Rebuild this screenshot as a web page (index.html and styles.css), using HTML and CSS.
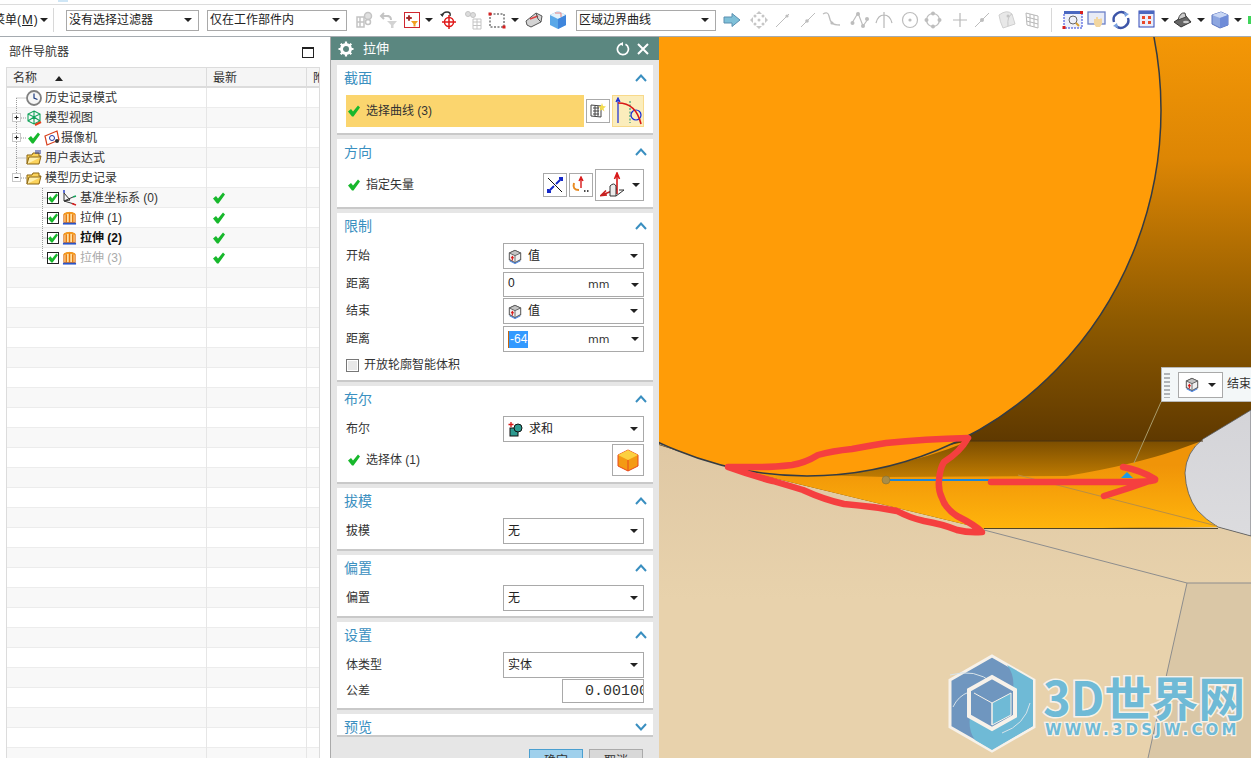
FILE: index.html
```html
<!DOCTYPE html>
<html lang="zh">
<head>
<meta charset="utf-8">
<title>拉伸</title>
<link rel="stylesheet" href="styles.css">
</head>
<body>
<svg class="defs" width="0" height="0" aria-hidden="true">
  <symbol id="chk" viewBox="0 0 12 12"><path d="M0 6.5 L3 4 L5 6.5 L10 0.5 L12 2.5 L5.5 11.5 L4 11.5 Z" fill="#17b82c"/></symbol>
  <symbol id="ext" viewBox="0 0 16 16"><path d="M2 4 Q8 0 14 4 L14 13 L2 13 Z" fill="#ffe0a0" stroke="#d8620c"/><path d="M2 3 Q8 0 14 3 V5 Q8 2 2 5 Z" fill="#f59a1c"/><path d="M4.5 4 V13 M8 3 V13 M11.5 4 V13" stroke="#e8780c" stroke-width="1.6"/><path d="M1 14 H15" stroke="#2a55c8" stroke-width="2"/></symbol>
  <symbol id="val" viewBox="0 0 16 16"><path d="M8 1 L14.5 4 V11.5 L8 15 L1.5 11.5 V4 Z" fill="#f0f0f0" stroke="#5c5c5c" stroke-width="1.2"/><path d="M1.5 4 L8 7 L14.5 4 L8 1 Z" fill="#c4c4c4" stroke="#5c5c5c"/><path d="M8 7 V15" fill="none" stroke="#5c5c5c"/><path d="M5 12.5 V8.5 M3.6 10 L5 8 L6.4 10" stroke="#d81818" fill="none" stroke-width="1.2"/><path d="M2 13 L8 16 L14 13" stroke="#4a84e0" fill="none" stroke-width="1.2"/></symbol>
  <symbol id="fold" viewBox="0 0 16 16"><path d="M1 5 H6 L7 3 H13 V6 H15 L13 14 H1 Z" fill="#fbd35c" stroke="#8a6410"/><path d="M1 14 L3 7 H15" fill="#fff0b0" stroke="#8a6410"/></symbol>
</svg>
<div class="app">
  <div class="strip"><span class="strip-tab"></span></div>
  <header class="toolbar">
    <span class="menu-btn">菜单(<u>M</u>)</span><i class="tri"></i><span class="tsep"></span>
    <div class="sel tsel w133"><span>没有选择过滤器</span><i class="tri"></i></div>
    <div class="sel tsel w140"><span>仅在工作部件内</span><i class="tri"></i></div>
    <span class="ic m5"><svg width="20" height="20" viewBox="0 0 20 20"><g fill="none" stroke="#c4c4c4" stroke-width="1.5"><path d="M3 7 H10 V17 H3 Z M6 7 V17 M3 12 H10"/><circle cx="14" cy="6" r="3.5" fill="#e0e0e0"/><circle cx="14" cy="12" r="2.5"/></g></svg></span>
    <span class="ic"><svg width="20" height="20" viewBox="0 0 20 20"><path d="M3 6 H11 M6 3 L3 6 L6 9 M9 6 Q13 6 13 10" stroke="#c4c4c4" stroke-width="2" fill="none"/><path d="M9 11 H19 L15.5 15 V18 H13 V15 Z" fill="#d3d3d3"/></svg></span>
    <span class="ic c23"><svg width="16" height="16" viewBox="0 0 16 16"><rect x="0.5" y="0.5" width="15" height="15" fill="#fff" stroke="#d0272f"/><path d="M5 3 V9 M2 6 H8" stroke="#a02020" stroke-width="1.3"/><circle cx="5" cy="6" r="1.4" fill="none" stroke="#a02020"/><path d="M7 9 H14 L11.5 12 V14.5 H9.5 V12 Z" fill="#f0a020"/></svg></span>
    <i class="tri cell-tri"></i>
    <span class="ic"><svg width="20" height="20" viewBox="0 0 20 20"><path d="M4 6 Q5 2 9 2 Q13 2 12 6" fill="none" stroke="#333" stroke-width="1.5"/><path d="M2 4 L4.5 7 L6 3.5 Z" fill="#333"/><circle cx="11" cy="12" r="4.5" fill="none" stroke="#e01818" stroke-width="1.5"/><path d="M11 5 V19 M4 12 H18" stroke="#e01818" stroke-width="1.5"/></svg></span>
    <span class="ic m1"><svg width="20" height="20" viewBox="0 0 20 20"><g fill="none" stroke="#c4c4c4"><circle cx="5" cy="4" r="2.5" fill="#dcdcdc"/><circle cx="10" cy="5" r="2.5" fill="#dcdcdc"/><path d="M10 9 H18 V19 H10 Z M14 9 V19 M10 12 H18 M10 15.5 H18"/></g></svg></span>
    <span class="ic"><svg width="20" height="20" viewBox="0 0 20 20"><rect x="3" y="4" width="14" height="13" fill="none" stroke="#333" stroke-dasharray="2 1.5"/><rect x="1.5" y="2.5" width="3" height="3" fill="#d82020"/><rect x="15.5" y="15.5" width="3" height="3" fill="#d82020"/></svg></span>
    <i class="tri cell-tri"></i>
    <span class="ic"><svg width="20" height="20" viewBox="0 0 20 20"><path d="M2 11 L12 3 L18 6 L17 12 L7 17 L3 15 Z" fill="#d4d4d4" stroke="#555"/><path d="M6 9 L14 6" stroke="#e04040" stroke-width="1.5"/><path d="M12 3 L14 9 L17 12" fill="none" stroke="#555"/></svg></span>
    <span class="ic"><svg width="20" height="20" viewBox="0 0 20 20"><path d="M10 1 L18 5 V15 L10 19 L2 15 V5 Z" fill="#5aa8e8"/><path d="M2 5 L10 9 L18 5 L10 1 Z" fill="#e4f2fb"/><path d="M10 9 V19 L18 15 V5 Z" fill="#3f86dc"/><path d="M7 3 H13 V7" stroke="#e48080" fill="none"/></svg></span>
    <div class="sel tsel w140 m7s"><span>区域边界曲线</span><i class="tri"></i></div>
    <span class="ic m4"><svg width="18" height="14" viewBox="0 0 18 14"><path d="M1 4 H9 V0.5 L17 7 L9 13.5 V10 H1 Z" fill="#7fc0d8" stroke="#5a8fb0"/></svg></span>
    <span class="ic m3"><svg width="20" height="20" viewBox="0 0 20 20"><g fill="#c6c6c6"><path d="M10 1 L13 4 H7 Z M10 19 L13 16 H7 Z M1 10 L4 7 V13 Z M19 10 L16 7 V13 Z"/><circle cx="6" cy="6" r="1.5"/><circle cx="14" cy="6" r="1.5"/><circle cx="6" cy="14" r="1.5"/><circle cx="14" cy="14" r="1.5"/><circle cx="10" cy="10" r="1.5"/></g></svg></span>
    <span class="ic"><svg width="20" height="20" viewBox="0 0 20 20"><path d="M3 17 L16 4" stroke="#bdbdbd"/><circle cx="14" cy="6" r="1.6" fill="#bdbdbd"/></svg></span>
    <span class="ic m1"><svg width="20" height="20" viewBox="0 0 20 20"><path d="M3 17 L17 3" stroke="#bdbdbd"/><circle cx="9" cy="11" r="1.8" fill="#bdbdbd"/></svg></span>
    <span class="ic"><svg width="20" height="20" viewBox="0 0 20 20"><path d="M1 4 Q6 1 7 6 T10 13 T18 15" fill="none" stroke="#bdbdbd" stroke-width="1.3"/><circle cx="10" cy="13" r="1.6" fill="#bdbdbd"/></svg></span>
    <span class="ic m4"><svg width="20" height="20" viewBox="0 0 20 20"><path d="M2 13 L8 3 L13 16 L18 9" fill="none" stroke="#bdbdbd" stroke-width="1.2"/><g fill="#bdbdbd"><circle cx="2.5" cy="13" r="2"/><circle cx="8" cy="4" r="2"/><circle cx="13" cy="16" r="2"/><circle cx="17" cy="9" r="2"/></g></svg></span>
    <span class="ic"><svg width="20" height="20" viewBox="0 0 20 20"><path d="M2 13 Q4 5 10 5 Q16 5 18 13 M10 2 V18" fill="none" stroke="#b8b8b8" stroke-width="1.2"/></svg></span>
    <span class="ic m2"><svg width="20" height="20" viewBox="0 0 20 20"><circle cx="10" cy="10" r="7.5" fill="none" stroke="#bdbdbd" stroke-width="1.2"/><circle cx="10" cy="10" r="1.6" fill="#bdbdbd"/></svg></span>
    <span class="ic n1"><svg width="20" height="20" viewBox="0 0 20 20"><circle cx="10" cy="10" r="6.5" fill="none" stroke="#bdbdbd" stroke-width="1.2"/><g fill="#bdbdbd"><circle cx="10" cy="3.5" r="2"/><circle cx="10" cy="16.5" r="2"/><circle cx="3.5" cy="10" r="2"/><circle cx="16.5" cy="10" r="2"/></g></svg></span>
    <span class="ic m3"><svg width="16" height="16" viewBox="0 0 16 16"><path d="M8 1 V15 M1 8 H15" stroke="#b8b8b8" stroke-width="1.2"/></svg></span>
    <span class="ic n2"><svg width="20" height="20" viewBox="0 0 20 20"><path d="M3 17 L17 3" stroke="#bdbdbd"/><circle cx="10" cy="10" r="2" fill="#bdbdbd"/></svg></span>
    <span class="ic m1"><svg width="20" height="20" viewBox="0 0 20 20"><path d="M2 5 Q10 -1 15 4 L18 14 L6 18 Q3 12 2 5 Z" fill="#e8e8e8" stroke="#d0d0d0"/><path d="M15 4 Q10 6 11 16" fill="none" stroke="#c8c8c8"/><circle cx="11" cy="6" r="1.5" fill="#c4c4c4"/></svg></span>
    <span class="ic m1"><svg width="18" height="18" viewBox="0 0 18 18"><path d="M3 2 L15 5 V17 L4 14 Z M7 3 V15 M11 4 V16 M3.5 6 L15 9 M3.5 10 L15 13" fill="none" stroke="#b8b8b8"/></svg></span>
    <span class="tsep m7"></span>
    <span class="ic m9"><svg width="22" height="20" viewBox="0 0 22 20"><rect x="2" y="3" width="18" height="15" fill="#eef1fa" stroke="#2a3ed8" stroke-dasharray="2 1"/><rect x="2" y="1" width="18" height="3" fill="#4a68c0"/><circle cx="11" cy="10" r="4" fill="none" stroke="#666"/><path d="M14 13 L17 16" stroke="#d8a030" stroke-width="2"/><rect x="0.5" y="16" width="3" height="3" fill="#d82020"/><rect x="18" y="1" width="3" height="3" fill="#d82020"/></svg></span>
    <span class="ic"><svg width="22" height="20" viewBox="0 0 22 20"><rect x="2" y="2" width="17" height="12" fill="#e8ebf6" stroke="#6b80c8" stroke-width="1.3"/><path d="M8 14 V9 H10 V7 H12 V9 H14 L15 8 L16 9 V14 L14 17 H10 Z" fill="#f2d6a0"/></svg></span>
    <span class="ic"><svg width="20" height="20" viewBox="0 0 20 20"><path d="M3 12 A7.5 7.5 0 0 1 15 4" fill="none" stroke="#3d55a8" stroke-width="2.4"/><path d="M17 8 A7.5 7.5 0 0 1 5 16" fill="none" stroke="#3d55a8" stroke-width="2.4"/><path d="M13 2 L18 4 L14 7 Z M7 18 L2 16 L6 13 Z" fill="#7aa0e0"/></svg></span>
    <span class="ic m2"><svg width="20" height="20" viewBox="0 0 20 20"><rect x="2" y="1" width="15" height="16" fill="#eaeefa" stroke="#3048b8"/><rect x="2" y="1" width="15" height="3" fill="#4a68c0"/><g fill="#e8482a"><path d="M5 6 H8 V9 H5 Z M11 6 H14 V9 H11 Z M5 11 H8 V14 H5 Z M11 11 H14 V14 H11 Z"/></g></svg></span>
    <i class="tri cell-tri wide"></i>
    <span class="ic"><svg width="20" height="20" viewBox="0 0 20 20"><path d="M1 12 L12 5 L18 12 L8 17 Z" fill="#666" stroke="#333"/><path d="M5 10 Q7 2 12 3 L13 7 Z" fill="#ccc" stroke="#444"/><ellipse cx="13" cy="12" rx="3" ry="1.3" fill="#ccc"/></svg></span>
    <i class="tri cell-tri wide"></i>
    <span class="ic m1"><svg width="20" height="20" viewBox="0 0 20 20"><path d="M2 5 L11 2 L18 5 V15 L10 18 L2 14 Z" fill="#8da6e0" stroke="#5a74c0"/><path d="M2 5 L10 8 L18 5 L11 2 Z" fill="#c8d6f4"/><path d="M10 8 V18 L18 15 V5 Z" fill="#6f8cd8"/></svg></span>
    <i class="tri cell-tri wide"></i>
    <span class="green-tip"></span>
  </header>
  <main class="work">
    <aside class="nav">
      <div class="nav-title"><span>部件导航器</span><span class="max-btn"></span></div>
      <div class="tree">
        <div class="thead">
          <div class="c1"><span>名称</span><i class="tri-up"></i></div>
          <div class="c2">最新</div>
          <div class="c3">附注</div>
        </div>
        <div class="tbody">
          <svg class="tree-lines" width="60" height="180" viewBox="0 0 60 180">
            <g fill="none" stroke="#9a9a9a" stroke-dasharray="1 1">
              <path d="M9.5 10 V90 M9.5 10 H19 M14 30 H19 M14 50 H20 M9.5 70 H19 M14 90 H19 M35.5 100 V170 M35.5 110 H40 M35.5 130 H40 M35.5 150 H40 M35.5 170 H40"/>
            </g>
            <g fill="#fff" stroke="#c8c8c8"><rect x="5.5" y="25.5" width="8" height="8"/><rect x="5.5" y="45.5" width="8" height="8"/><rect x="5.5" y="85.5" width="8" height="8"/></g>
            <path d="M7.5 29.5 H11.5 M9.5 27.5 V31.5 M7.5 49.5 H11.5 M9.5 47.5 V51.5 M7.5 89.5 H11.5" stroke="#222" fill="none"/>
          </svg>
          <div class="row lv0"><svg class="ti" width="16" height="16" viewBox="0 0 16 16"><circle cx="8" cy="8" r="7" fill="#f6f6f6" stroke="#808080" stroke-width="1.8"/><path d="M8 3.5 V8 L11.5 9.5" stroke="#1a3a80" stroke-width="1.2" fill="none"/></svg><span>历史记录模式</span></div>
          <div class="row lv0"><svg class="ti" width="16" height="16" viewBox="0 0 16 16"><path d="M8 1 L14 4 V11 L8 14 L2 11 V4 Z M2 4 L8 7 L14 4 M8 7 V14 M2 11 L8 7 L14 11 M8 1 V7" fill="none" stroke="#12a35a" stroke-width="1.1"/><path d="M9 15 L15 12" stroke="#e8401c" stroke-width="2"/></svg><span>模型视图</span></div>
          <div class="row lv0b"><svg class="tc" width="12" height="12"><use href="#chk"/></svg><svg class="ti cam" width="16" height="16" viewBox="0 0 16 16"><path d="M1 6 L13 1 L15 10 L3 15 Z" fill="#fff" stroke="#d8401c" stroke-width="1.2"/><circle cx="8" cy="8" r="2.5" fill="none" stroke="#2038a8"/><circle cx="13" cy="11" r="2" fill="#333"/></svg><span>摄像机</span></div>
          <div class="row lv0"><svg class="ti" width="16" height="16" viewBox="0 0 16 16"><use href="#fold"/><path d="M9 1 H15 M9 3 H15" stroke="#2a3a9a"/></svg><span>用户表达式</span></div>
          <div class="row lv0"><svg class="ti" width="16" height="16"><use href="#fold"/></svg><span>模型历史记录</span></div>
          <div class="row lv1"><i class="box"><svg width="10" height="10"><use href="#chk"/></svg></i><svg class="ti" width="15" height="16" viewBox="0 0 15 16"><path d="M2 3 V11 L12 14 M2 11 L11 7 M2 3 L8 10 L2 11" fill="none" stroke="#333"/><path d="M2 0 V3" stroke="#2038c8" stroke-width="1.4"/><path d="M11 7 L14 6" stroke="#12a35a" stroke-width="1.4"/><path d="M10 13.5 L14 15" stroke="#d82020" stroke-width="1.4"/></svg><span>基准坐标系 (0)</span><svg class="ok" width="12" height="12"><use href="#chk"/></svg></div>
          <div class="row lv1"><i class="box"><svg width="10" height="10"><use href="#chk"/></svg></i><svg class="ti" width="15" height="16"><use href="#ext"/></svg><span>拉伸 (1)</span><svg class="ok" width="12" height="12"><use href="#chk"/></svg></div>
          <div class="row lv1 bold"><i class="box"><svg width="10" height="10"><use href="#chk"/></svg></i><svg class="ti" width="15" height="16"><use href="#ext"/></svg><span>拉伸 (2)</span><svg class="ok" width="12" height="12"><use href="#chk"/></svg></div>
          <div class="row lv1 dim"><i class="box"><svg width="10" height="10"><use href="#chk"/></svg></i><svg class="ti" width="15" height="16"><use href="#ext"/></svg><span>拉伸 (3)</span><svg class="ok" width="12" height="12"><use href="#chk"/></svg></div>
        </div>
      </div>
    </aside>
    <section class="dlg">
      <div class="dlg-head">
        <svg width="16" height="16" viewBox="0 0 16 16"><circle cx="8" cy="8" r="4.5" fill="none" stroke="#fff" stroke-width="3"/><path d="M8 0.5 V3 M8 13 V15.5 M0.5 8 H3 M13 8 H15.5 M2.7 2.7 L4.5 4.5 M11.5 11.5 L13.3 13.3 M2.7 13.3 L4.5 11.5 M11.5 4.5 L13.3 2.7" stroke="#fff" stroke-width="2.2"/></svg>
        <span class="dlg-title">拉伸</span>
        <svg class="dh-r" width="14" height="14" viewBox="0 0 14 14"><path d="M5 2 A5.5 5.5 0 1 0 9.5 2.3" fill="none" stroke="#fff" stroke-width="1.7"/><path d="M7 0 L3.5 2 L7 4 Z" fill="#fff"/></svg>
        <svg class="dh-x" width="12" height="12" viewBox="0 0 12 12"><path d="M1 1 L11 11 M11 1 L1 11" stroke="#fff" stroke-width="2"/></svg>
      </div>
      <div class="dlg-body">
        <div class="sec">
          <div class="sec-h"><span>截面</span><svg width="12" height="8" viewBox="0 0 12 8"><path d="M1 7 L6 1.5 L11 7" fill="none" stroke="#3a8fc0" stroke-width="2"/></svg></div>
          <div class="frow h32">
            <div class="pick"><svg width="12" height="12"><use href="#chk"/></svg><span>选择曲线 (3)</span></div>
            <span class="ibtn b24"><svg width="16" height="16" viewBox="0 0 16 16"><path d="M1 2 L11 3 V14 L1 13 Z M3 5 H9 M3 8 H9 M3 11 H9 M5 3 V13 M8 3 V13" fill="none" stroke="#444"/><path d="M12 0 L13 3 L16 3.5 L13.5 5.5 L14.5 8.5 L12 6.5 L9.5 8 L10.5 5.5 L8.5 3.5 L11 3 Z" fill="#f4dc4c"/></svg></span>
            <span class="ibtn b32 act"><svg width="28" height="28" viewBox="0 0 28 28"><path d="M4 26 V3 M2 5 L4 1 L6 5" fill="none" stroke="#1428d8" stroke-width="1.2"/><path d="M16 4 V26" stroke="#109070" stroke-dasharray="2 1.5"/><circle cx="22" cy="18" r="5" fill="none" stroke="#1428d8" stroke-width="1.2"/><path d="M4 6 Q22 6 27 27" fill="none" stroke="#d81818" stroke-width="1.6"/></svg></span>
          </div>
        </div>
        <div class="sec">
          <div class="sec-h"><span>方向</span><svg width="12" height="8" viewBox="0 0 12 8"><path d="M1 7 L6 1.5 L11 7" fill="none" stroke="#3a8fc0" stroke-width="2"/></svg></div>
          <div class="frow h32 vec">
            <svg width="12" height="12"><use href="#chk"/></svg><span class="vec-l">指定矢量</span>
            <span class="ibtn b24"><svg width="18" height="18" viewBox="0 0 18 18"><path d="M2 2 L16 16" stroke="#111"/><path d="M10 8 L16 2 M13 2 H16 V5 M8 10 L2 16 M2 13 V16 H5" fill="none" stroke="#1428c8" stroke-width="2"/></svg></span>
            <span class="ibtn b24"><svg width="20" height="18" viewBox="0 0 20 18"><path d="M10 12 V3 M8 5 L10 1 L12 5" fill="none" stroke="#d81818" stroke-width="1.4"/><path d="M3 7 Q1 14 8 14" fill="none" stroke="#e88a20" stroke-width="2"/><path d="M13 15 H14.5 M16 15 H17.5" stroke="#111" stroke-width="1.5"/></svg></span>
            <span class="ibtn bvec"><svg width="26" height="26" viewBox="0 0 26 26"><path d="M17 22 V3 M14.5 7 L17 1 L19.5 7" fill="none" stroke="#d81818" stroke-width="1.6"/><path d="M17 17 L2 23 M6 18.5 L1 23.5 L7 23" fill="none" stroke="#c82020" stroke-width="1.6"/><path d="M10 14 Q14 10 16 14 V24 H10 Z" fill="#ececec" stroke="#333"/><path d="M16 24 L24 18 H19" fill="none" stroke="#333"/></svg><i class="tri"></i></span>
          </div>
        </div>
        <div class="sec">
          <div class="sec-h"><span>限制</span><svg width="12" height="8" viewBox="0 0 12 8"><path d="M1 7 L6 1.5 L11 7" fill="none" stroke="#3a8fc0" stroke-width="2"/></svg></div>
          <div class="frow"><label>开始</label><div class="sel dsel"><svg width="14" height="15"><use href="#val"/></svg><span>值</span><i class="tri"></i></div></div>
          <div class="frow t3 h25"><label>距离</label><div class="sel dsel num"><span class="v raise">0</span><span class="unit">mm</span><i class="tri"></i></div></div>
          <div class="frow t1"><label>结束</label><div class="sel dsel"><svg width="14" height="15"><use href="#val"/></svg><span>值</span><i class="tri"></i></div></div>
          <div class="frow t2"><label>距离</label><div class="sel dsel num"><span class="v"><b class="hl">-64</b></span><span class="unit">mm</span><i class="tri"></i></div></div>
          <div class="frow t3 h20"><i class="cbx"></i><span class="cb-l">开放轮廓智能体积</span></div>
        </div>
        <div class="sec">
          <div class="sec-h"><span>布尔</span><svg width="12" height="8" viewBox="0 0 12 8"><path d="M1 7 L6 1.5 L11 7" fill="none" stroke="#3a8fc0" stroke-width="2"/></svg></div>
          <div class="frow"><label>布尔</label><div class="sel dsel"><svg width="15" height="15" viewBox="0 0 15 15"><rect x="2" y="6" width="8" height="8" fill="#2d9a90" stroke="#111"/><circle cx="10" cy="6" r="4" fill="#2d9a90" stroke="#111"/><path d="M3 0 V5 M0.5 2.5 H5.5" stroke="#d81818" stroke-width="1.3"/></svg><span>求和</span><i class="tri"></i></div></div>
          <div class="frow t2 h32 vec"><svg width="12" height="12"><use href="#chk"/></svg><span class="vec-l">选择体 (1)</span><span class="ibtn b32"><svg width="24" height="24" viewBox="0 0 24 24"><path d="M12 2 L22 7 V18 L12 23 L2 18 V7 Z" fill="#f49a14" stroke="#e8481c"/><path d="M2 7 L12 12 L22 7 L12 2 Z" fill="#fcd040"/><path d="M12 12 V23" stroke="#e8481c"/></svg></span></div>
        </div>
        <div class="sec">
          <div class="sec-h"><span>拔模</span><svg width="12" height="8" viewBox="0 0 12 8"><path d="M1 7 L6 1.5 L11 7" fill="none" stroke="#3a8fc0" stroke-width="2"/></svg></div>
          <div class="frow"><label>拔模</label><div class="sel dsel"><span>无</span><i class="tri"></i></div></div>
        </div>
        <div class="sec">
          <div class="sec-h"><span>偏置</span><svg width="12" height="8" viewBox="0 0 12 8"><path d="M1 7 L6 1.5 L11 7" fill="none" stroke="#3a8fc0" stroke-width="2"/></svg></div>
          <div class="frow"><label>偏置</label><div class="sel dsel"><span>无</span><i class="tri"></i></div></div>
        </div>
        <div class="sec">
          <div class="sec-h"><span>设置</span><svg width="12" height="8" viewBox="0 0 12 8"><path d="M1 7 L6 1.5 L11 7" fill="none" stroke="#3a8fc0" stroke-width="2"/></svg></div>
          <div class="frow"><label>体类型</label><div class="sel dsel"><span>实体</span><i class="tri"></i></div></div>
          <div class="frow t1 h24"><label>公差</label><div class="tol"><span>0.00100</span></div></div>
        </div>
        <div class="sec closed">
          <div class="sec-h"><span>预览</span><svg width="12" height="8" viewBox="0 0 12 8"><path d="M1 1 L6 6.5 L11 1" fill="none" stroke="#3a8fc0" stroke-width="2"/></svg></div>
        </div>
      </div>
      <div class="dlg-foot"><span class="btn ok-btn">确定</span><span class="btn">取消</span></div>
    </section>
    <div class="view">
      <svg class="scene" viewBox="659 37 592 721" preserveAspectRatio="none">
        <defs>
          <linearGradient id="gBack" x1="0" y1="37" x2="0" y2="441" gradientUnits="userSpaceOnUse"><stop offset="0" stop-color="#f49706"/><stop offset="0.3" stop-color="#dd8604"/><stop offset="0.7" stop-color="#8e5a00"/><stop offset="1" stop-color="#5f3900"/></linearGradient>
          <linearGradient id="gLow" x1="0" y1="441" x2="0" y2="478" gradientUnits="userSpaceOnUse"><stop offset="0" stop-color="#7c4e00"/><stop offset="1" stop-color="#c07c02"/></linearGradient>
          <linearGradient id="gBand" x1="0" y1="465" x2="0" y2="528" gradientUnits="userSpaceOnUse"><stop offset="0" stop-color="#f09408"/><stop offset="1" stop-color="#ffb40c"/></linearGradient>
          <linearGradient id="gTan" x1="0" y1="440" x2="0" y2="600" gradientUnits="userSpaceOnUse"><stop offset="0" stop-color="#dfc8a4"/><stop offset="1" stop-color="#e8d2ac"/></linearGradient>
          <linearGradient id="gGrey" x1="0" y1="410" x2="0" y2="540" gradientUnits="userSpaceOnUse"><stop offset="0" stop-color="#d4d4d8"/><stop offset="1" stop-color="#dcdcdf"/></linearGradient>
        </defs>
        <rect x="659" y="37" width="592" height="721" fill="url(#gBack)"/>
        <path d="M659 445 L728 467 L984 529 L1218 527 L1251 536 V758 H659 Z" fill="url(#gTan)"/>
        <path d="M1187 583 H1251 V758 H1148 Z" fill="#dac7a6"/>
        <path d="M728 467 L800 476 L969 441 L1210 441 L1218 527 L984 529 Z" fill="url(#gBand)"/>
        <path d="M780 474 Q880 478 969 441 L1202 441 L1177 450 Q1133 465 1067 476 L885 477 Z" fill="url(#gLow)"/>
        <path d="M1251 410 L1203 439 Q1186 452 1185 473 Q1186 495 1197 510 Q1206 520 1218 527 L1251 536 Z" fill="url(#gGrey)" stroke="#55595e" stroke-width="0.8"/>
        <path d="M969 441 H1203" stroke="#4a3210" fill="none"/>
        <path d="M984 528.5 H1218" stroke="#4f4428" fill="none"/>
        <path d="M1018 475 L1217 526" stroke="#b98f45" fill="none"/>
        <path d="M659 444 L728 467 M984 530 L1187 583 M1187 583 H1251 M1187 583 L1148 758" stroke="#8d8d8d" fill="none"/>
        <ellipse cx="807" cy="110" rx="354" ry="366" fill="#ff9c07" stroke="#333b44" stroke-width="1.5"/>
        <path d="M1134 463 L1161 402" stroke="#a99b6a" fill="none"/>
        <path d="M886 480 H1127" stroke="#1b86d8" stroke-width="2" fill="none"/>
        <path d="M1121 478 L1127 472 L1133 478 Z" fill="#1b9be8"/>
        <circle cx="886" cy="480" r="4" fill="#a88c48" stroke="#7a6a30" stroke-width="0.5"/>
        <path d="M968 438 Q925 439 886 443 Q868 446 852 449 Q832 451 818 455 Q805 463 792 465 Q775 467 762 467 L728 467 Q750 475 773 481 Q790 486 803 490 Q825 500 844 504 Q870 506 897 511 Q910 518 924 521 Q942 524 957 530 Q968 533 982 532 Q975 525 957 516 Q945 508 942 498 Q938 490 939 480 Q940 468 944 462 Q960 452 968 438 Z" fill="none" stroke="#f53f3f" stroke-width="6.5" stroke-linejoin="round" stroke-linecap="round"/>
        <path d="M991 482 H1134 Q1146 482 1155 480 M1123 467 Q1140 470 1155 479 Q1130 488 1104 496" fill="none" stroke="#f53f3f" stroke-width="6.5" stroke-linejoin="round" stroke-linecap="round"/>
        <g class="logo">
          <path d="M992 656 L1034 680 V727 L992 751 L950 727 V680 Z" fill="#6f96bf" stroke="#f7f2ea" stroke-width="3"/>
          <path d="M1007 665 L1033 680 V726 L992 750 L975 740 Q968 730 970 717 L992 729 L1013 717 V690 Q1015 675 1007 665 Z" fill="#6fbad6"/>
          <path d="M950 675 Q975 668 993 683 M953 707 Q958 696 969 692 M1030 703 Q1025 725 1002 733" fill="none" stroke="#d8e4ea"/>
          <path d="M992 677 L1015 690 V716 L992 729 L969 716 V690 Z" fill="#6f96bf" stroke="#f7f2ea" stroke-width="4"/>
          <path d="M992 703 L1011 693 V715 L992 725 Z" fill="#6fbad6" stroke="#f7f2ea" stroke-width="1"/>
          <path d="M974 693 L992 703 V725" fill="none" stroke="#f7f2ea"/>
          <text class="wm-big" x="1043" y="716">3D世界网</text>
          <text class="wm-url" x="1045" y="735">WWW.3DSJW.COM</text>
        </g>
      </svg>
      <div class="float-bar">
        <span class="grip"></span>
        <div class="sel fsel"><svg width="14" height="15"><use href="#val"/></svg><i class="tri"></i></div>
        <span class="fl-l">结束</span>
      </div>
    </div>
  </main>
</div>
</body>
</html>
```
FILE: styles.css
```css
* { box-sizing: border-box; }
html, body { margin: 0; height: 100%; overflow: hidden; }
body { font: 12px/1.2 "Liberation Sans", "Noto Sans CJK SC", sans-serif; color: #222; background: #fff; }
.defs { position: absolute; }
.app { display: flex; flex-direction: column; height: 758px; width: 1251px; overflow: hidden; }

.strip { height: 5px; border-bottom: 1px solid #dcdcdc; background: #fff; display: flex; }
.strip-tab { width: 10px; height: 2px; margin-left: 58px; background: #cfe6f6; }

.toolbar { height: 32px; flex: none; display: flex; align-items: center; background: #fff; border-bottom: 1px solid #a5abb0; overflow: hidden; padding-bottom: 1px; }
.menu-btn { margin-left: -7px; white-space: nowrap; width: 47px; flex: none; }
.menu-btn u { padding: 0 1px; font-size: 13px; }
.tsep { width: 1px; height: 24px; background: #d8d8d8; flex: none; margin-left: 5px; margin-right: 12px; }
.tsep.m7 { margin: 0 0 0 7px; }
.tri { display: block; flex: none; width: 0; height: 0; border-left: 4px solid transparent; border-right: 4px solid transparent; border-top: 4px solid #222; }
.sel { display: flex; align-items: center; border: 1px solid #a9a9a9; background: #fff; flex: none; }
.tsel { height: 21px; padding: 0 6px 0 2px; margin-right: 8px; justify-content: space-between; white-space: nowrap; }
.tsel.w133 { width: 133px; }
.tsel.w140 { width: 140px; margin-right: 0; }
.tsel.m7s { margin-left: 6px; }
.ic { width: 24px; height: 24px; flex: none; display: flex; align-items: center; justify-content: center; }
.ic.c23 { width: 23px; }
.ic.n1 { margin-left: -1px; }
.ic.n2 { margin-left: -2px; }
.ic.m1 { margin-left: 1px; }
.ic.m2 { margin-left: 2px; }
.ic.m3 { margin-left: 3px; }
.ic.m4 { margin-left: 4px; }
.ic.m5 { margin-left: 5px; }
.ic.m9 { margin-left: 9px; }
.cell-tri { margin: 0 3px 0 2px; }
.cell-tri.wide { margin: 0 2px 0 2px; }
.green-tip { width: 3px; height: 8px; background: #3fd45a; flex: none; margin-left: 4px; }

.work { flex: 1; display: flex; min-height: 0; }
.nav { width: 330px; flex: none; background: #fff; display: flex; flex-direction: column; overflow: hidden; }
.nav-title { height: 30px; flex: none; display: flex; align-items: center; justify-content: space-between; padding: 0 16px 0 9px; color: #333; }
.max-btn { width: 12px; height: 11px; border: 1px solid #222; border-top-width: 2px; }
.tree { width: 314px; margin-left: 6px; flex: 1; border-left: 1px solid #dcdcdc; border-right: 1px solid #dcdcdc; display: flex; flex-direction: column; min-height: 0; }
.thead { height: 21px; flex: none; display: flex; background: #f5f5f5; border-top: 1px solid #dcdcdc; border-bottom: 2px solid #dcdcdc; align-items: stretch; color: #333; }
.thead .c1 { width: 200px; padding: 2px 0 0 6px; display: flex; align-items: center; border-right: 1px solid #dcdcdc; }
.thead .c2 { width: 100px; padding: 2px 0 0 6px; display: flex; align-items: center; border-right: 1px solid #dcdcdc; }
.thead .c3 { flex: 1; padding: 2px 0 0 6px; display: flex; align-items: center; overflow: hidden; white-space: nowrap; }
.tri-up { width: 0; height: 0; margin-left: 18px; border-left: 4.5px solid transparent; border-right: 4.5px solid transparent; border-bottom: 5px solid #222; }
.tbody { position: relative; flex: 1;
  background:
    linear-gradient(#e6e6e6, #e6e6e6) 199px 0 / 1px 100% no-repeat,
    linear-gradient(#e6e6e6, #e6e6e6) 299px 0 / 1px 100% no-repeat,
    repeating-linear-gradient(#fff 0, #fff 19px, #ececec 19px, #ececec 20px, #f8f8f8 20px, #f8f8f8 39px, #ececec 39px, #ececec 40px); }
.tree-lines { position: absolute; left: 0; top: 0; }
.row { height: 20px; display: flex; align-items: center; position: relative; white-space: nowrap; color: #333; }
.row .ti { flex: none; }
.lv0 { padding-left: 19px; }
.lv0 .ti { margin-right: 3px; }
.lv0b { padding-left: 21px; }
.tc { margin-right: 4px; flex: none; }
.lv0b .cam { margin-right: 1px; }
.lv1 { padding-left: 40px; }
.lv1 .ti { margin: 0 3px; }
.box { width: 12px; height: 12px; border: 1px solid #222; background: #fff; display: flex; align-items: center; justify-content: center; flex: none; }
.ok { position: absolute; left: 206px; top: 4px; }
.bold span { font-weight: 700; color: #111; }
.dim span { color: #aaa; }

.dlg { width: 329px; flex: none; border-left: 1px solid #aaa; background: #e6e6e6; display: flex; flex-direction: column; overflow: hidden; }
.dlg-head { height: 23px; flex: none; background: #5b8780; display: flex; align-items: center; padding: 0 10px 0 7px; color: #fff; }
.dlg-title { margin-left: 9px; font-size: 13px; flex: 1; }
.dh-x { margin-left: 7px; }
.dlg-body { padding: 5px 6px 0; display: flex; flex-direction: column; gap: 4px; flex: none; }
.sec { background: #fff; border-bottom: 2px solid #c9c9c9; padding: 0 9px 5px; }
.sec:nth-child(-n+2), .sec:nth-child(4) { padding-bottom: 6px; }
.sec:nth-child(3) { padding-bottom: 5px; }
.sec.closed { height: 23px; padding: 0 9px; overflow: hidden; }
.sec-h { height: 26px; margin: 0 -3px 4px -2px; display: flex; align-items: center; justify-content: space-between; font-size: 14px; color: #3a8fc0; }
.frow { display: flex; align-items: center; height: 26px; }
.frow.h32 { height: 32px; gap: 2px; }
.frow.h25 { height: 25px; }
.frow.h24 { height: 24px; }
.frow.h20 { height: 20px; }
.frow.t1 { margin-top: 1px; }
.frow.t2 { margin-top: 2px; }
.frow.t3 { margin-top: 3px; }
.frow label { flex: 1; color: #333; font-size: 12px; }
.dsel { width: 141px; height: 100%; padding: 0 5px 0 4px; gap: 6px; }
.dsel span { flex: 1; }
.dsel.num { gap: 0; padding: 0 4px 0 4px; }
.dsel .v { flex: 1; }
.raise { align-self: flex-start; margin-top: 3px; }
.hl { display: inline-block; font-weight: 400; height: 17px; line-height: 17px; padding: 0 1px; width: 20px; background: #3399ff; color: #fff; border-left: 1px solid #c8660a; }
.dsel .unit { flex: none; width: 31px; font: 11px "DejaVu Sans", sans-serif; color: #333; margin-right: 12px; }
.pick { flex: 1; height: 32px; background: #fbd56e; display: flex; align-items: center; gap: 6px; padding-left: 2px; color: #333; }
.ibtn { flex: none; display: flex; align-items: center; justify-content: center; border: 1px solid #aaa; background: #fff; }
.b24 { width: 24px; height: 24px; }
.b32 { width: 32px; height: 32px; }
.b32.act { background: #fbedbc; border-color: #f8d98a; }
.bvec { width: 49px; height: 32px; gap: 6px; }
.vec { padding-left: 2px; }
.vec-l { flex: 1; margin-left: 4px; color: #333; }
.cbx { width: 13px; height: 13px; border: 1px solid #777; background: #e8e8e8; box-shadow: inset 0 0 0 1px #fff; flex: none; }
.cb-l { margin-left: 5px; color: #333; }
.tol { width: 82px; height: 100%; border: 1px solid #a9a9a9; overflow: hidden; padding-left: 22px; white-space: nowrap; display: flex; align-items: center; }
.tol span { font: 15px "Liberation Mono", monospace; color: #333; }
.dlg-foot { display: flex; justify-content: flex-end; gap: 6px; padding: 12px 16px 0 0; flex: none; }
.btn { width: 54px; height: 24px; border: 1px solid #aaa; background: #d8d8d8; text-align: center; line-height: 22px; color: #333; flex: none; }
.ok-btn { background: #9fd0ec; border-color: #4a9fd0; }

.view { flex: 1; position: relative; overflow: hidden; min-width: 0; }
.scene { display: block; width: 100%; height: 100%; }
.wm-big { font: 700 47px "Noto Sans CJK SC", sans-serif; fill: #6fbad6; stroke: #f7f2ea; stroke-width: 3px; paint-order: stroke; }
.wm-url { font: 700 15px "DejaVu Sans", sans-serif; letter-spacing: 3.2px; fill: #6fbad6; stroke: #f7f2ea; stroke-width: 2.5px; paint-order: stroke; }
.float-bar { position: absolute; left: 502px; top: 330px; width: 120px; height: 35px; background: #f3f7f8; border: 1px solid #b8b8b8; display: flex; align-items: center; white-space: nowrap; }
.grip { width: 6px; height: 26px; margin-left: 2px; background: radial-gradient(circle, #b0b4b8 1.2px, transparent 1.5px) 0 0 / 3px 4px; }
.fsel { width: 45px; height: 26px; margin-left: 8px; padding: 0 6px; justify-content: space-between; }
.fl-l { margin-left: 4px; color: #333; }
```
